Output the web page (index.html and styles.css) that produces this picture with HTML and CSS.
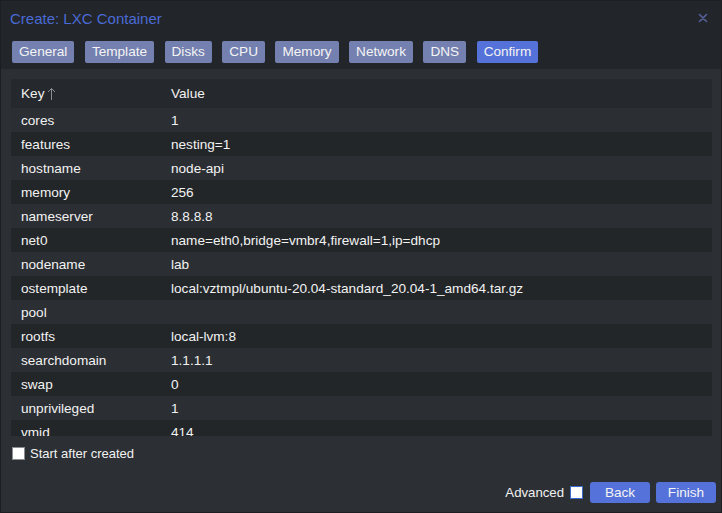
FILE: index.html
```html
<!DOCTYPE html>
<html>
<head>
<meta charset="utf-8">
<link rel="stylesheet" href="styles.css">
</head>
<body>
<div class="window">
  <div class="titlebar">
    <span class="title">Create: LXC Container</span>
    <svg class="close" width="10" height="10" viewBox="0 0 10 10"><path d="M1.5 1.5 L8.5 8.5 M8.5 1.5 L1.5 8.5" stroke="#56619a" stroke-width="1.6" stroke-linecap="round"/></svg>
  </div>
  <div class="tabs">
    <span class="tab">General</span>
    <span class="tab">Template</span>
    <span class="tab">Disks</span>
    <span class="tab">CPU</span>
    <span class="tab">Memory</span>
    <span class="tab">Network</span>
    <span class="tab">DNS</span>
    <span class="tab active">Confirm</span>
  </div>
  <div class="panel">
    <div class="grid">
      <div class="row head"><span class="k">Key <svg class="arrow" width="9" height="14" viewBox="0 0 9 14"><path d="M4.5 1.5 V13 M1 5 L4.5 1.5 L8 5" stroke="#8a8d92" stroke-width="1" fill="none"/></svg></span><span class="v">Value</span></div>
      <div class="row"><span class="k">cores</span><span class="v">1</span></div>
      <div class="row alt"><span class="k">features</span><span class="v">nesting=1</span></div>
      <div class="row"><span class="k">hostname</span><span class="v">node-api</span></div>
      <div class="row alt"><span class="k">memory</span><span class="v">256</span></div>
      <div class="row"><span class="k">nameserver</span><span class="v">8.8.8.8</span></div>
      <div class="row alt"><span class="k">net0</span><span class="v">name=eth0,bridge=vmbr4,firewall=1,ip=dhcp</span></div>
      <div class="row"><span class="k">nodename</span><span class="v">lab</span></div>
      <div class="row alt"><span class="k">ostemplate</span><span class="v">local:vztmpl/ubuntu-20.04-standard_20.04-1_amd64.tar.gz</span></div>
      <div class="row"><span class="k">pool</span><span class="v"></span></div>
      <div class="row alt"><span class="k">rootfs</span><span class="v">local-lvm:8</span></div>
      <div class="row"><span class="k">searchdomain</span><span class="v">1.1.1.1</span></div>
      <div class="row alt"><span class="k">swap</span><span class="v">0</span></div>
      <div class="row"><span class="k">unprivileged</span><span class="v">1</span></div>
      <div class="row alt"><span class="k">vmid</span><span class="v">414</span></div>
    </div>
    <label class="start"><span class="cb"></span>Start after created</label>
    <div class="footer">
      <span class="adv">Advanced</span><span class="cb blue"></span>
      <span class="btn back">Back</span>
      <span class="btn">Finish</span>
    </div>
  </div>
</div>
</body>
</html>
```
FILE: styles.css
```css
html, body {
  margin: 0;
  padding: 0;
  background: #222529;
}
body {
  font-family: "Liberation Sans", Arial, sans-serif;
  font-size: 13.6px;
  color: #f2f2f2;
}
.window {
  width: 722px;
  height: 513px;
  box-sizing: border-box;
  border: 1px solid #1c1e21;
  background: #222529;
  display: flex;
  flex-direction: column;
}
.titlebar {
  height: 34px;
  display: flex;
  align-items: center;
  justify-content: space-between;
  padding: 0 13px 0 9px;
}
.title {
  font-size: 15px;
  color: #4a6bd6;
}
.close {
  display: block;
  margin-top: -1px;
}
.tabs {
  display: flex;
  gap: 10.5px;
  padding: 6px 11px 6px 11px;
}
.tab {
  height: 22px;
  line-height: 22px;
  padding: 0 7px;
  background: #7480b0;
  color: #f4f4f4;
  border-radius: 2px;
}
.tab.active {
  background: #5472d9;
}
.panel {
  flex: 1;
  background: #2c2f34;
  padding: 10px 9px 0 10px;
  display: flex;
  flex-direction: column;
}
.grid {
  height: 357px;
  overflow: hidden;
  background: #2b2e33;
}
.row {
  display: flex;
  height: 24px;
  align-items: center;
  background: #2b2e33;
}
.row.alt {
  background: #232629;
}
.row.head {
  height: 29px;
  background: #25282c;
}
.k {
  width: 150px;
  padding-left: 10px;
  display: flex;
  align-items: center;
}
.v {
  flex: 1;
}
.arrow {
  margin-left: 3px;
}
.start {
  display: flex;
  align-items: center;
  margin-top: 10px;
  padding-left: 1px;
  height: 14px;
  font-size: 13px;
}
.cb {
  width: 11px;
  height: 11px;
  background: #ffffff;
  border: 1px solid #8a8d92;
  display: inline-block;
  margin-right: 5px;
}
.cb.blue {
  border-color: #3b6ad0;
  margin: 0 7px 0 6px;
}
.footer {
  margin-top: auto;
  margin-right: -4px;
  display: flex;
  align-items: center;
  justify-content: flex-end;
  padding-bottom: 9px;
}
.adv {
  font-size: 13.2px;
}
.btn {
  width: 60px;
  height: 21px;
  line-height: 21px;
  text-align: center;
  background: #5472d9;
  color: #f4f4f4;
  border-radius: 3px;
}
.btn.back {
  margin-right: 6px;
}
```
